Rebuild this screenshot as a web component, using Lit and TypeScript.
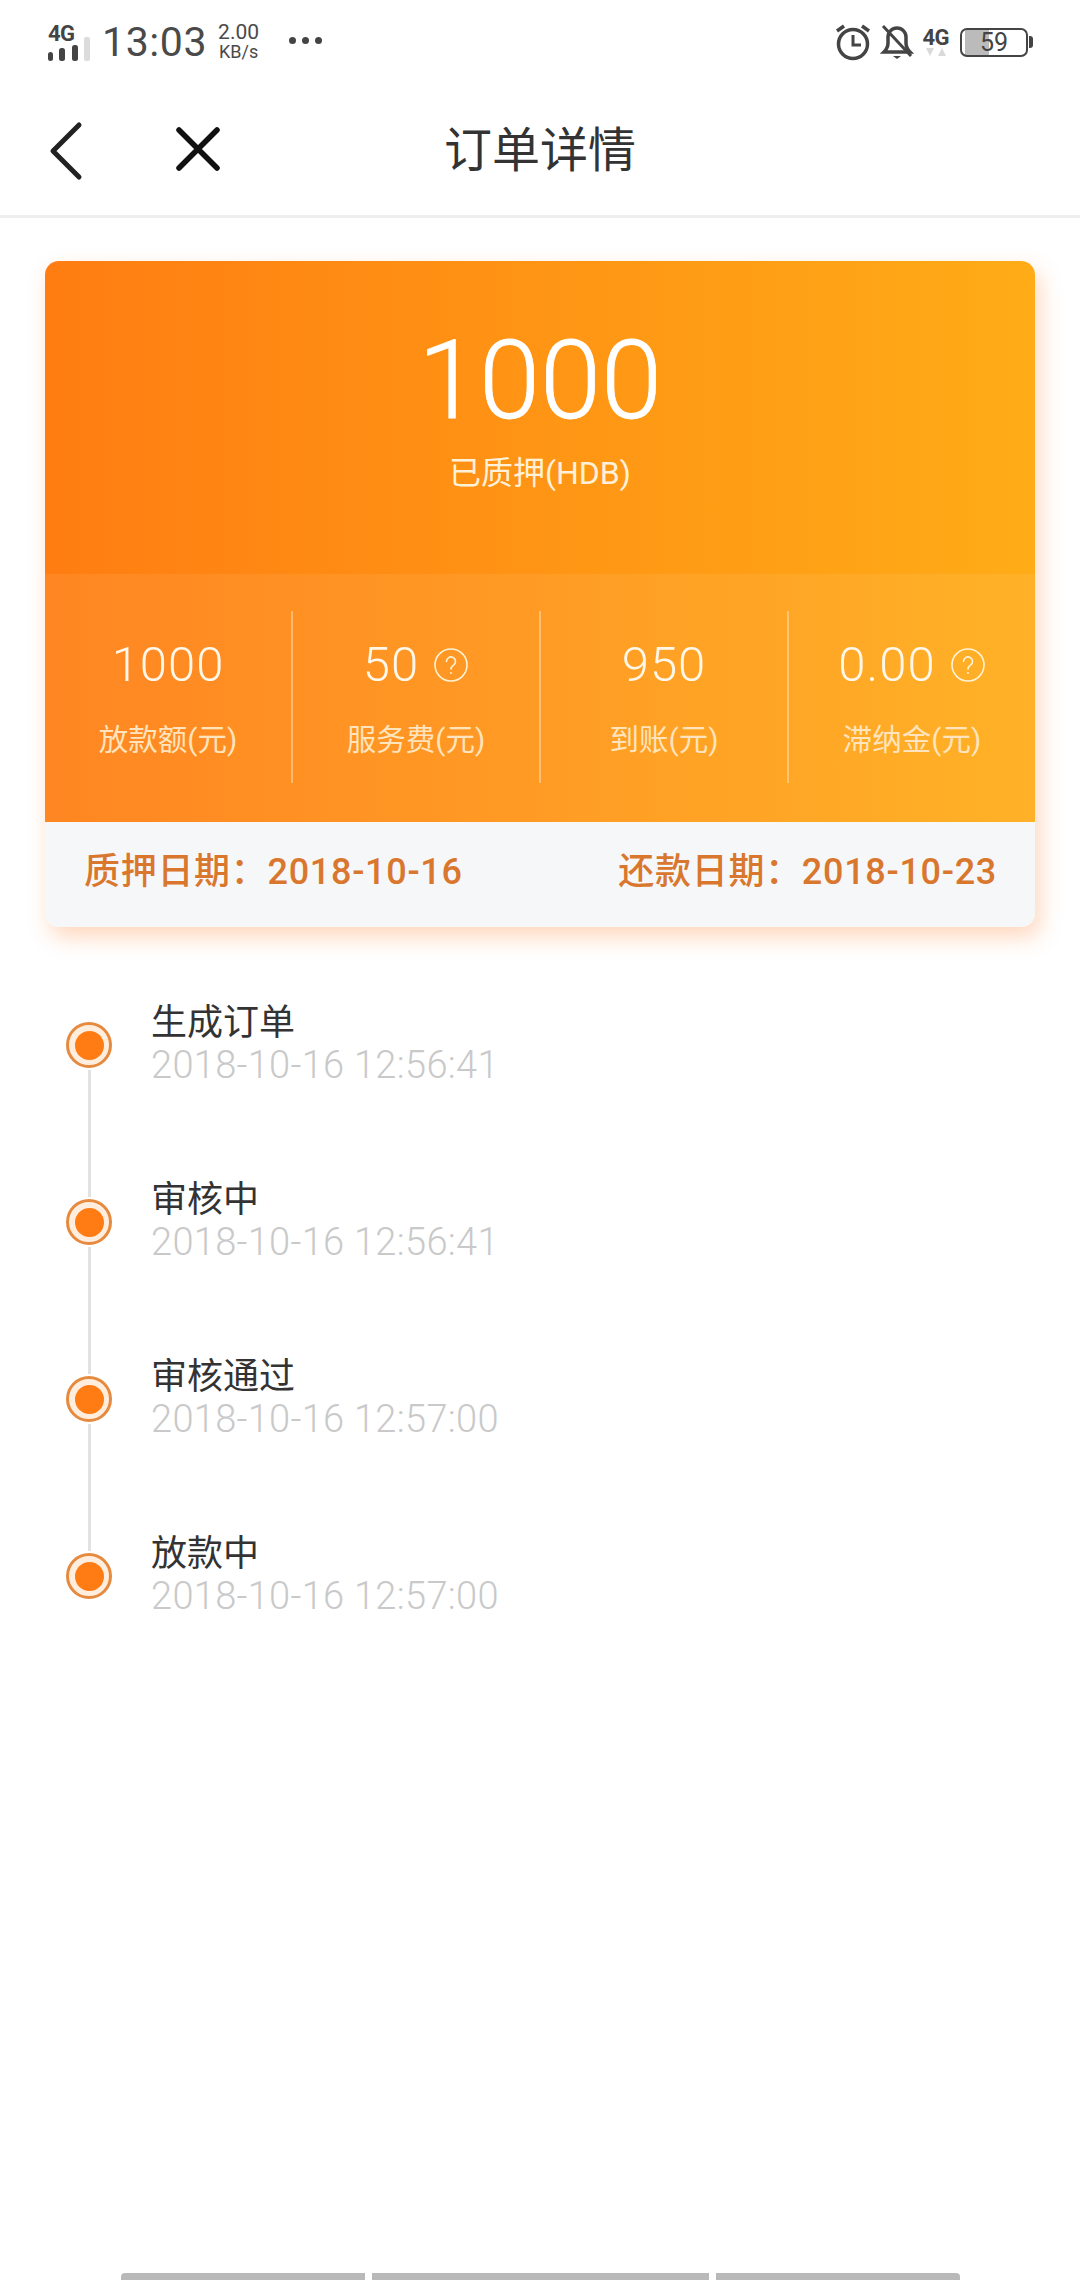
import { LitElement, html, css } from "lit";
import { customElement } from "lit/decorators.js";

const stats = [
  { v: "1000", l: "放款额(元)", q: false },
  { v: "50", l: "服务费(元)", q: true },
  { v: "950", l: "到账(元)", q: false },
  { v: "0.00", l: "滞纳金(元)", q: true },
];
const steps = [
  { t: "生成订单", d: "2018-10-16 12:56:41" },
  { t: "审核中", d: "2018-10-16 12:56:41" },
  { t: "审核通过", d: "2018-10-16 12:57:00" },
  { t: "放款中", d: "2018-10-16 12:57:00" },
];

@customElement("app-root")
export class AppRoot extends LitElement {
  static styles = css`
    :host {
      display: flex;
      flex-direction: column;
      min-height: 2280px;
      background: #fff;
      font-family: Roboto, "Noto Sans CJK SC", sans-serif;
      color: #333;
    }
    .status {
      height: 76px;
      display: flex;
      align-items: center;
      padding: 8px 52px 0 48px;
      box-sizing: border-box;
      color: #444;
    }
    .time { font-size: 41px; margin-left: 12px; letter-spacing: 0.6px; line-height: 1; color: #4a4a4a; }
    .speed { font-size: 18px; line-height: 20px; margin-left: 11px; display: flex; flex-direction: column; align-items: center; color: #4a4a4a; }
    .speed span:first-child { font-size: 21px; }
    .dots { margin-left: 30px; display: flex; gap: 6px; margin-bottom: 4px; }
    .dots i { width: 7px; height: 7px; border-radius: 50%; background: #444; }
    .sig { display: flex; flex-direction: column; width: 42px; }
    .sig b { font-size: 22px; line-height: 20px; font-weight: 700; letter-spacing: -0.5px; color: #444; }
    .sig svg { margin-top: -9px; }
    .right { margin-left: auto; display: flex; align-items: center; }
    .small4g { font-size: 22px; font-weight: 700; line-height: 20px; letter-spacing: -0.5px; color: #444; }
    .net { display: flex; flex-direction: column; align-items: center; margin: 0 11px 0 8px; }
    .battery {
      position: relative;
      width: 68px;
      height: 29px;
      box-sizing: border-box;
      border: 2.5px solid #444;
      border-radius: 7px;
      display: flex;
      align-items: center;
      justify-content: center;
      font-size: 25px;
      color: #444;
      background: linear-gradient(90deg, #fff 3px, #bbb 3px, #bbb 27px, #fff 27px);
    }
    .battery::after {
      content: "";
      position: absolute;
      right: -7px;
      top: 6px;
      width: 4px;
      height: 12px;
      background: #444;
      border-radius: 0 3px 3px 0;
    }
    nav {
      height: 139px;
      position: relative;
      display: flex;
      align-items: center;
      justify-content: center;
      border-bottom: 3px solid #eeeeee;
    }
    nav h1 { margin: 0; font-size: 48px; font-weight: 400; color: #333; }
    .back { position: absolute; left: 49px; top: 45px; }
    .close { position: absolute; left: 176px; top: 51px; }
    .card {
      margin: 43px 45px 0;
      border-radius: 14px;
      overflow: hidden;
      box-shadow: 5px 10px 22px rgba(255, 130, 50, 0.32);
    }
    .top { background: linear-gradient(90deg, #ff7d12, #ffac17); color: #fff; }
    .main { height: 313px; display: flex; flex-direction: column; align-items: center; box-sizing: border-box; padding-top: 58px; }
    .amount { font-size: 110px; font-weight: 300; line-height: 124px; -webkit-text-stroke: 0.8px #fff; }
    .sub { font-size: 32px; line-height: 40px; margin-top: 10px; color: #fff1d8; }
    .stats { height: 248px; display: flex; background: rgba(255, 255, 255, 0.07); padding: 37px 0 39px; box-sizing: border-box; }
    .stat { flex: 1; display: flex; flex-direction: column; align-items: center; border-left: 2px solid rgba(255, 255, 255, 0.35); }
    .stat:first-child { border-left: 0; }
    .val { display: flex; align-items: center; gap: 14px; font-size: 49px; font-weight: 300; letter-spacing: 1px; line-height: 60px; margin-top: 24px; color: #fff8ea; }
    .lbl { font-size: 29.5px; line-height: 40px; margin-top: 25px; color: #ffe4bd; }
    .foot {
      height: 105px;
      display: flex;
      justify-content: space-between;
      align-items: center;
      padding: 0 38px 14px 39px;
      box-sizing: border-box;
      background: #f6f7f9;
      color: #d9772e;
      font-size: 36px;
      font-weight: 500;
      letter-spacing: 0.7px;
    }
    .timeline { margin-top: 74px; padding-left: 66px; }
    .step { display: flex; height: 177px; }
    .rail { width: 46px; display: flex; flex-direction: column; align-items: center; padding-top: 21px; box-sizing: border-box; }
    .dot {
      width: 46px;
      height: 46px;
      flex: none;
      box-sizing: border-box;
      border: 3px solid #e58a3e;
      border-radius: 50%;
      background: #ffeedd;
      display: flex;
      align-items: center;
      justify-content: center;
    }
    .dot i { width: 29px; height: 29px; border-radius: 50%; background: #ff7c14; }
    .line { flex: 1; width: 3px; background: #e2e2e2; margin: 2px 0 -19px; }
    .txt { margin-left: 39px; }
    .t { font-size: 36px; line-height: 44px; color: #333; }
    .d { font-size: 38px; line-height: 40px; font-weight: 300; letter-spacing: 0.3px; color: #c9c9c9; }
    .bars { margin-top: auto; display: flex; padding-left: 121px; gap: 7px; }
    .bars i { height: 7px; background: #b9b9b9; }
    .b1 { width: 244px; border-radius: 4px 0 0 0; }
    .b2 { width: 337px; }
    .b3 { width: 244px; border-radius: 0 4px 0 0; }
  `;

  private q() {
    return html`<svg width="36" height="36" viewBox="0 0 36 36" fill="none" stroke="#fff3d6" stroke-width="1.6">
      <circle cx="18" cy="18" r="16"></circle>
      <path d="M13.5 14.5a4.5 4.5 0 1 1 7 3.7c-1.6 1.1-2.5 1.9-2.5 3.8" stroke-linecap="round"></path>
      <circle cx="18" cy="26" r="1" fill="#fff3d6" stroke="none"></circle>
    </svg>`;
  }

  render() {
    return html`
      <div class="status">
        <div class="sig">
          <b>4G</b>
          <svg width="42" height="26" viewBox="0 0 42 26">
            <rect x="0" y="17" width="5" height="9" rx="2.5" fill="#444"></rect>
            <rect x="11" y="13" width="6" height="13" rx="2.5" fill="#444"></rect>
            <rect x="24" y="10" width="6" height="16" rx="2.5" fill="#444"></rect>
            <rect x="36" y="2" width="6" height="24" rx="2" fill="#dcdcdc"></rect>
          </svg>
        </div>
        <span class="time">13:03</span>
        <div class="speed"><span>2.00</span><span>KB/s</span></div>
        <div class="dots"><i></i><i></i><i></i></div>
        <div class="right">
          <svg width="36" height="38" viewBox="0 0 36 38" fill="none" stroke="#444" stroke-width="3.5">
            <circle cx="18" cy="21" r="14.5"></circle>
            <path d="M18 12v10h8" stroke-width="3"></path>
            <path d="M2 8l7-5M34 8l-7-5" stroke-width="3.5"></path>
          </svg>
          <svg style="margin-left:9px" width="34" height="38" viewBox="0 0 34 38" fill="none" stroke="#444" stroke-width="3.5">
            <path d="M4 29h26c-3-3-4-5-4-9v-6a9 9 0 0 0-18 0v6c0 4-1 6-4 9z"></path>
            <path d="M13 33h8l-4 3z" fill="#444" stroke="none"></path>
            <path d="M3 3l28 30" stroke-width="3"></path>
          </svg>
          <div class="net">
            <span class="small4g">4G</span>
            <svg width="22" height="9" viewBox="0 0 22 9"><path d="M1 0h8l-4 8zM13 8h8l-4-8z" fill="#dadada"></path></svg>
          </div>
          <div class="battery">59</div>
        </div>
      </div>
      <nav>
        <svg class="back" width="34" height="60" viewBox="0 0 34 60" fill="none" stroke="#222" stroke-width="5" stroke-linecap="round" stroke-linejoin="round"><path d="M30 4L4 30l26 26"></path></svg>
        <svg class="close" width="44" height="44" viewBox="0 0 44 44" fill="none" stroke="#111" stroke-width="5.5" stroke-linecap="round"><path d="M3 3l38 38M41 3L3 41"></path></svg>
        <h1>订单详情</h1>
      </nav>
      <section class="card">
        <div class="top">
          <div class="main">
            <div class="amount">1000</div>
            <div class="sub">已质押(HDB)</div>
          </div>
          <div class="stats">
            ${stats.map(
              (s) => html`<div class="stat">
                <div class="val">${s.v}${s.q ? this.q() : ""}</div>
                <div class="lbl">${s.l}</div>
              </div>`
            )}
          </div>
        </div>
        <div class="foot"><span>质押日期：2018-10-16</span><span>还款日期：2018-10-23</span></div>
      </section>
      <section class="timeline">
        ${steps.map(
          (s, i) => html`<div class="step">
            <div class="rail">
              <div class="dot"><i></i></div>
              ${i < steps.length - 1 ? html`<div class="line"></div>` : ""}
            </div>
            <div class="txt">
              <div class="t">${s.t}</div>
              <div class="d">${s.d}</div>
            </div>
          </div>`
        )}
      </section>
      <div class="bars"><i class="b1"></i><i class="b2"></i><i class="b3"></i></div>
    `;
  }
}
